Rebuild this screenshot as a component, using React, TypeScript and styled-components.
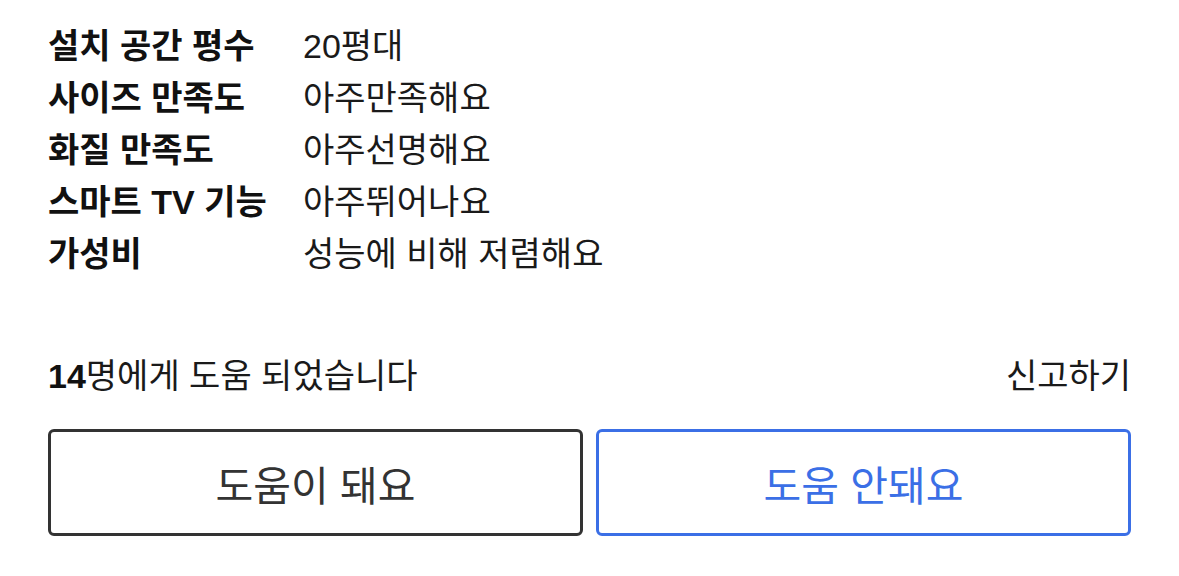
import React from 'react';
import styled, { createGlobalStyle } from 'styled-components';

const GlobalStyle = createGlobalStyle`
  body {
    margin: 0;
    background: #ffffff;
    font-family: 'Liberation Sans', 'Noto Sans CJK KR', sans-serif;
    color: #111111;
  }
`;

const Wrapper = styled.div`
  padding: 20px 48px 0 48px;
`;

const SpecList = styled.dl`
  margin: 0;
  display: grid;
  grid-template-columns: 255px 1fr;
  font-size: 34px;
  line-height: 52px;
`;

const SpecLabel = styled.dt`
  font-weight: 700;
  color: #111111;
  white-space: nowrap;
`;

const SpecValue = styled.dd`
  margin: 0;
  color: #1a1a1a;
  white-space: nowrap;
`;

const Footer = styled.div`
  display: flex;
  justify-content: space-between;
  align-items: center;
  margin-top: 70px;
  font-size: 34px;
  line-height: 52px;
  color: #1a1a1a;
`;

const Count = styled.strong`
  font-weight: 700;
  color: #111111;
`;

const ReportLink = styled.span`
  color: #1a1a1a;
`;

const ButtonRow = styled.div`
  display: grid;
  grid-template-columns: 1fr 1fr;
  gap: 13px;
  margin-top: 27px;
`;

const VoteButton = styled.button<{ $accent?: boolean }>`
  height: 107px;
  background: #ffffff;
  border: 3px solid ${({ $accent }) => ($accent ? '#3b6fe6' : '#333333')};
  border-radius: 6px;
  color: ${({ $accent }) => ($accent ? '#3b6fe6' : '#333333')};
  font-family: 'Liberation Sans', 'Noto Sans CJK KR', sans-serif;
  font-size: 41px;
  cursor: pointer;
`;

const specs = [
  ['설치 공간 평수', '20평대'],
  ['사이즈 만족도', '아주만족해요'],
  ['화질 만족도', '아주선명해요'],
  ['스마트 TV 기능', '아주뛰어나요'],
  ['가성비', '성능에 비해 저렴해요'],
];

export default function App() {
  return (
    <>
      <GlobalStyle />
      <Wrapper>
        <SpecList>
          {specs.map(([label, value]) => (
            <React.Fragment key={label}>
              <SpecLabel>{label}</SpecLabel>
              <SpecValue>{value}</SpecValue>
            </React.Fragment>
          ))}
        </SpecList>
        <Footer>
          <span>
            <Count>14</Count>명에게 도움 되었습니다
          </span>
          <ReportLink>신고하기</ReportLink>
        </Footer>
        <ButtonRow>
          <VoteButton>도움이 돼요</VoteButton>
          <VoteButton $accent>도움 안돼요</VoteButton>
        </ButtonRow>
      </Wrapper>
    </>
  );
}
